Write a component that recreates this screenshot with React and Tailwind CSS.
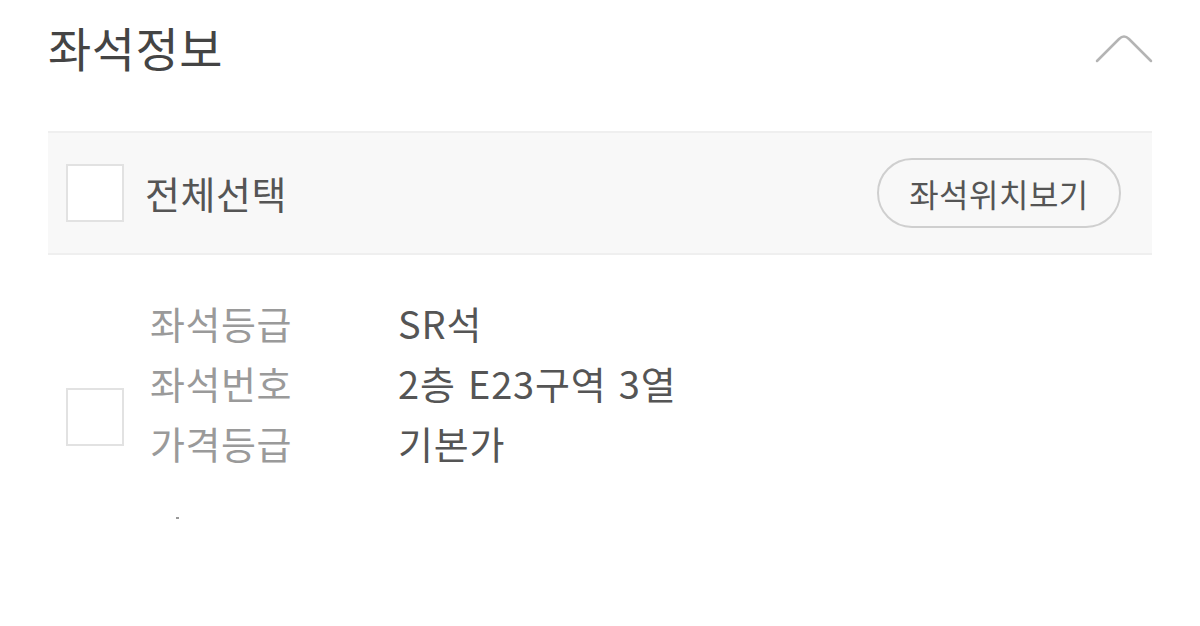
import React from "react";

const font = { fontFamily: '"Noto Sans CJK KR", "Noto Sans", sans-serif' };

function Box() {
  return <div className="w-[58px] h-[58px] shrink-0 bg-white border-2 border-[#e2e2e2]" />;
}

export default function App() {
  const rows = [
    ["좌석등급", "SR석"],
    ["좌석번호", "2층 E23구역 3열"],
    ["가격등급", "기본가"],
  ];

  return (
    <div className="w-[1200px] h-[626px] bg-white px-[48px] overflow-hidden" style={font}>
      {/* 헤더 */}
      <div className="flex items-center justify-between h-[92px]">
        <h1 className="text-[47px] leading-none text-[#444] tracking-[0.5px]">좌석정보</h1>
        <svg width="58" height="32" viewBox="0 0 58 32" fill="none" className="mr-[-1px] mt-[4px]">
          <path
            d="M2 29 L24 7 Q29 2 34 7 L56 29"
            stroke="#b4b4b4"
            strokeWidth="2.5"
            strokeLinecap="round"
            strokeLinejoin="round"
          />
        </svg>
      </div>

      {/* 전체선택 */}
      <div className="mt-[39px] h-[124px] bg-[#f8f8f8] border-t-2 border-b-2 border-[#efefef] flex items-center pl-[18px] pr-[31px]">
        <Box />
        <span className="ml-[21px] text-[38px] leading-none text-[#555] tracking-[0.5px]">전체선택</span>
        <button className="ml-auto w-[244px] h-[70px] rounded-full border-2 border-[#cfcfcf] bg-[#f8f8f8] text-[32px] text-[#555] leading-none tracking-[0.5px]">
          좌석위치보기
        </button>
      </div>

      {/* 좌석 */}
      <div className="flex items-start pl-[18px] pt-[37px]">
        <div className="mt-[96px]">
          <Box />
        </div>
        <div className="ml-[26px] flex flex-col">
          {rows.map(([label, value]) => (
            <div key={label} className="flex h-[60px] items-center">
              <span className="w-[248px] text-[38px] text-[#9a9a9a] tracking-[0.5px]">{label}</span>
              <span className="text-[38px] text-[#555] tracking-[0.8px] [word-spacing:3px]">{value}</span>
            </div>
          ))}
          <div className="mt-[45px] ml-[26px] w-[3px] h-[2px] bg-[#999]" />
        </div>
      </div>
    </div>
  );
}
